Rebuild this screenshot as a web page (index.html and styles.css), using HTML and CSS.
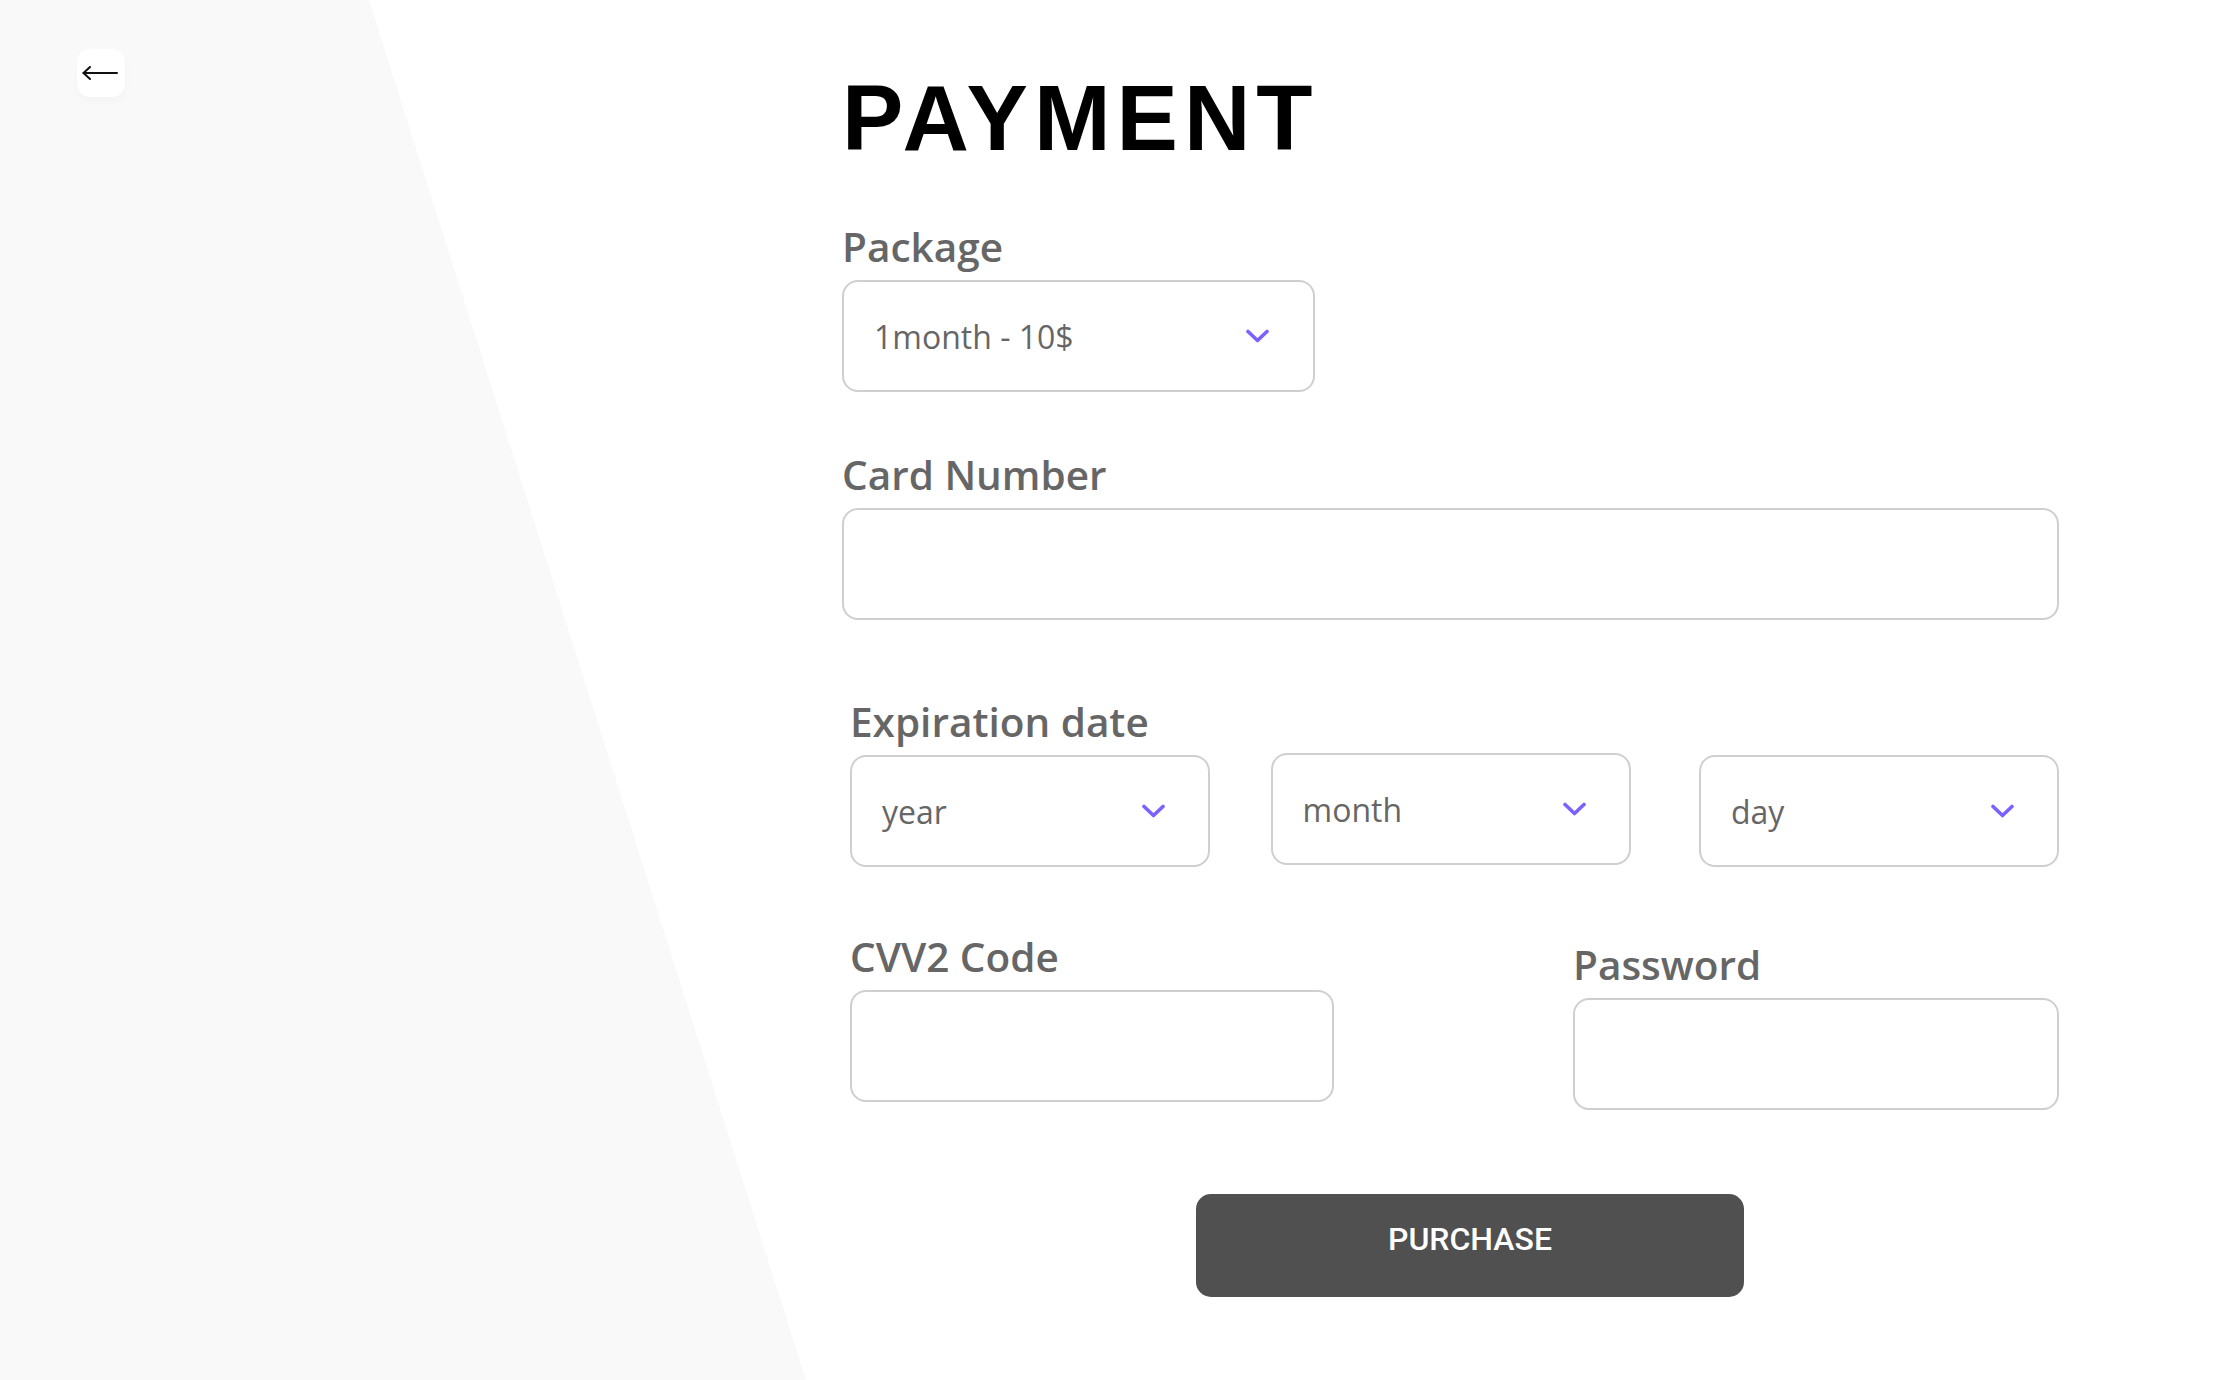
FILE: index.html
```html
<!DOCTYPE html>
<html lang="en">
<head>
<meta charset="utf-8">
<title>Payment</title>
<link rel="stylesheet" href="styles.css">
</head>
<body>
<div class="page">
  <aside class="side">
    <button class="back" type="button" aria-label="Back">
      <svg width="36" height="14" viewBox="0 0 36 14" fill="none" stroke="#111" stroke-width="2" stroke-linecap="round" stroke-linejoin="round">
        <path d="M1.5 7 H35"/>
        <path d="M8 1 L1.5 7 L8 13"/>
      </svg>
    </button>
  </aside>
  <main class="form">
    <h1 class="title">PAYMENT</h1>

    <div class="field field-package">
      <div class="label">Package</div>
      <div class="select select-package">
        <span class="select-text">1month - 10$</span>
        <svg class="chev" width="24" height="14" viewBox="0 0 24 14" fill="none" stroke="#7b61ff" stroke-width="3.6" stroke-linecap="round" stroke-linejoin="round"><path d="M2.5 2.5 L12 11.5 L21.5 2.5"/></svg>
      </div>
    </div>

    <div class="field field-card">
      <div class="label">Card Number</div>
      <input class="input" type="text" aria-label="Card Number">
    </div>

    <div class="field field-exp">
      <div class="label">Expiration date</div>
      <div class="exp-row">
        <div class="select">
          <span class="select-text">year</span>
          <svg class="chev" width="24" height="14" viewBox="0 0 24 14" fill="none" stroke="#7b61ff" stroke-width="3.6" stroke-linecap="round" stroke-linejoin="round"><path d="M2.5 2.5 L12 11.5 L21.5 2.5"/></svg>
        </div>
        <div class="select select-month">
          <span class="select-text">month</span>
          <svg class="chev" width="24" height="14" viewBox="0 0 24 14" fill="none" stroke="#7b61ff" stroke-width="3.6" stroke-linecap="round" stroke-linejoin="round"><path d="M2.5 2.5 L12 11.5 L21.5 2.5"/></svg>
        </div>
        <div class="select">
          <span class="select-text">day</span>
          <svg class="chev" width="24" height="14" viewBox="0 0 24 14" fill="none" stroke="#7b61ff" stroke-width="3.6" stroke-linecap="round" stroke-linejoin="round"><path d="M2.5 2.5 L12 11.5 L21.5 2.5"/></svg>
        </div>
      </div>
    </div>

    <div class="pair-row">
      <div class="col col-cvv">
        <div class="label">CVV2 Code</div>
        <input class="input" type="text" aria-label="CVV2 Code">
      </div>
      <div class="col col-pass">
        <div class="label">Password</div>
        <input class="input" type="password" aria-label="Password">
      </div>
    </div>

    <button class="purchase" type="button">PURCHASE</button>
  </main>
</div>
</body>
</html>
```

FILE: styles.css
```css
html, body {
  margin: 0;
  padding: 0;
}

body {
  width: 2238px;
  height: 1380px;
  overflow: hidden;
  background: #ffffff;
  font-family: "Open Sans", "Noto Sans", sans-serif;
  position: relative;
}

body::before {
  content: "";
  position: absolute;
  left: 0;
  top: 0;
  width: 2238px;
  height: 1380px;
  background: #f9f9f9;
  clip-path: polygon(0 0, 369px 0, 806px 1380px, 0 1380px);
  z-index: 0;
}

.page {
  position: relative;
  z-index: 1;
  display: grid;
  grid-template-columns: 842px 1217px;
}

.side {
  padding: 49px 0 0 77px;
}

.back {
  width: 48px;
  height: 48px;
  border: none;
  border-radius: 13px;
  background: #ffffff;
  box-shadow: 0 4px 8px rgba(0, 0, 0, 0.025);
  display: flex;
  align-items: center;
  justify-content: center;
  padding: 0 2px 0 0;
  cursor: pointer;
}

.form {
  padding-top: 72px;
  display: flex;
  flex-direction: column;
}

.title {
  margin: 0;
  font-family: "Liberation Sans", Arial, sans-serif;
  font-weight: 700;
  font-size: 92px;
  line-height: 92px;
  letter-spacing: 6px;
  color: #000000;
}

.label {
  font-size: 40.5px;
  line-height: 38px;
  font-weight: 600;
  color: #666666;
  margin-bottom: 14px;
}

.field-package {
  margin-top: 64px;
}

.field-card {
  margin-top: 64px;
}

.field-exp {
  margin-top: 83px;
  padding-left: 8px;
}

.select,
.input {
  box-sizing: border-box;
  height: 112px;
  border: 2px solid #cfcfcf;
  border-radius: 16px;
  background: #ffffff;
}

.select {
  display: flex;
  align-items: center;
  justify-content: space-between;
  padding: 0 42px 0 30px;
}

.select-package {
  width: 473px;
  padding-right: 43px;
}

.select-text {
  font-size: 32px;
  line-height: 32px;
  color: #666666;
  padding-top: 2px;
}

.chev {
  display: block;
  width: 25px;
  height: 14px;
}

.input {
  display: block;
  width: 100%;
  outline: none;
  font-family: inherit;
  font-size: 32px;
  padding: 0 29px;
}

.exp-row {
  display: flex;
  justify-content: space-between;
}

.exp-row .select {
  width: 360px;
}

.select-month {
  margin-top: -2px;
  margin-left: -8px;
}

.pair-row {
  margin-top: 71px;
  padding-left: 8px;
  display: flex;
  justify-content: space-between;
  align-items: flex-start;
}

.col-cvv {
  width: 484px;
}

.col-pass {
  width: 486px;
  margin-top: 8px;
}

.purchase {
  margin-top: 84px;
  margin-left: 354px;
  width: 548px;
  height: 103px;
  box-sizing: border-box;
  border: none;
  border-radius: 15px;
  background: #505050;
  color: #ffffff;
  font-family: Roboto, "Liberation Sans", sans-serif;
  font-weight: 500;
  font-size: 32px;
  line-height: 32px;
  padding: 0 0 14px 0;
  text-align: center;
  align-self: flex-start;
  display: block;
  cursor: pointer;
}
```
